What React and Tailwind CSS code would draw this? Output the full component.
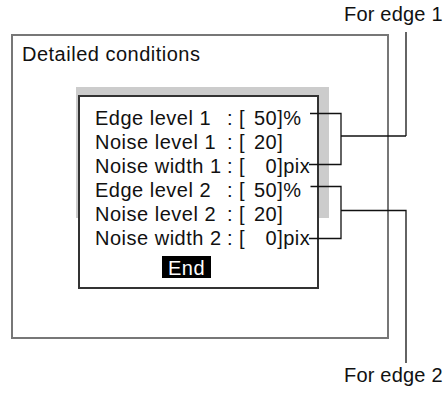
import React from 'react'

const rows = [
  { label: 'Edge level 1', value: '50', unit: '%' },
  { label: 'Noise level 1', value: '20', unit: '' },
  { label: 'Noise width 1', value: '0', unit: 'pix' },
  { label: 'Edge level 2', value: '50', unit: '%' },
  { label: 'Noise level 2', value: '20', unit: '' },
  { label: 'Noise width 2', value: '0', unit: 'pix' },
]

function Row({ label, value, unit }) {
  return (
    <div className="flex h-6 leading-6 whitespace-pre">
      <span className="w-[132px]">{label}</span>
      <span>: [</span>
      <span className="w-[32px] text-right">{value}</span>
      <span>]{unit}</span>
    </div>
  )
}

// callout lines for the two edge groups
function Callouts() {
  return (
    <svg className="absolute inset-0 pointer-events-none" width="445" height="393" viewBox="0 0 445 393"
      fill="none" stroke="#111" strokeWidth="1.3">
      <path d="M310 113.5 H341 V164.5 H309" />
      <path d="M341 136 H406" />
      <path d="M406 32 V136" />
      <path d="M310.5 186.5 H341 V238.5 H309" />
      <path d="M341 210.5 H406 V363" />
    </svg>
  )
}

export default function App() {
  return (
    <div className="relative w-[445px] h-[393px] bg-white text-[#111] text-[20px] tracking-[0.5px] whitespace-nowrap font-['Liberation_Sans',Arial,sans-serif]">
      <div className="pt-[2px] pl-[344px] leading-6 tracking-[0.2px]">For edge 1</div>

      {/* Outer window */}
      <div className="mt-[8px] ml-[11px] w-[378px] h-[305px] border-2 border-[#777]">
        <div className="pt-[6px] pl-[9px] leading-6">Detailed conditions</div>

        {/* shadow + dialog */}
        <div className="mt-[21px] ml-[63px] w-[253px] h-[131px] bg-[#cccccc] pt-[8px] pl-[2px]">
          <div className="w-[241px] h-[194px] border-2 border-[#333] bg-white pt-[9px] pl-[15px]">
            {rows.map((r) => <Row key={r.label} {...r} />)}
            <div className="mt-[6px] ml-[67px] inline-block bg-black text-white h-[22px] pt-[2px] leading-[20px] px-[6px]">
              End
            </div>
          </div>
        </div>
      </div>

      <div className="mt-[24px] pl-[344px] leading-6 tracking-[0.2px]">For edge 2</div>

      <Callouts />
    </div>
  )
}
